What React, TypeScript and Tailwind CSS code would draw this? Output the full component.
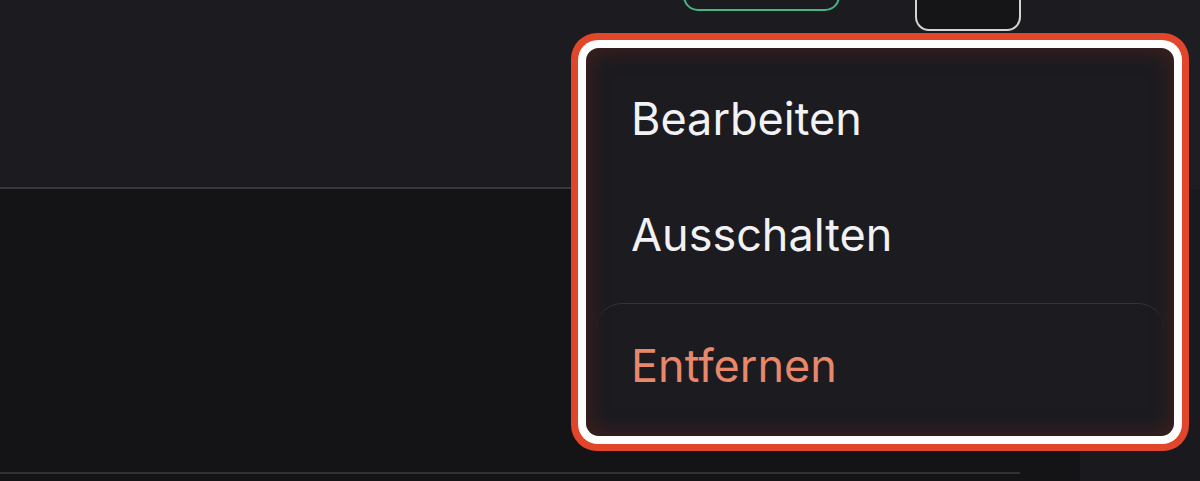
import React from "react";

const items = [
  { label: "Bearbeiten", danger: false },
  { label: "Ausschalten", danger: false },
];

function ActionMenu() {
  return (
    <div className="absolute left-[571px] top-[33px] w-[618px] h-[418px] rounded-[26px] bg-[#e1462b] p-[7px]">
      <div className="h-full w-full rounded-[20px] bg-white p-[8px]">
        <div className="flex h-full w-full flex-col rounded-[13px] bg-[#1c1b20] px-[10px] pt-[12px] pb-[10px] shadow-[inset_0_0_22px_rgba(110,38,28,0.55)]">
          {items.map((item) => (
            <div
              key={item.label}
              className="flex h-[116px] items-center px-[35px] text-[45px] leading-none text-[#f2f2f4]"
            >
              {item.label}
            </div>
          ))}
          <div className="mt-[11px] flex flex-1 items-center rounded-t-[26px] border-t border-[#34333a] px-[35px] text-[45px] leading-none text-[#e9876b]">
            Entfernen
          </div>
        </div>
      </div>
    </div>
  );
}

export default function App() {
  return (
    <div
      className="relative flex h-[481px] w-[1200px] overflow-hidden bg-[#141316]"
      style={{ fontFamily: "Inter, 'Noto Sans', sans-serif" }}
    >
      <div className="flex w-[1080px] flex-col">
        {/* header */}
        <div className="h-[189px] border-b-2 border-[#38373d] bg-[#1c1b20]">
          <div className="flex items-start">
            <div className="ml-[683px] -mt-[20px] h-[31px] w-[157px] rounded-[15px] border-2 border-[#45b584]" />
            <div className="ml-[75px] -mt-[14px] h-[45px] w-[106px] rounded-[14px] border-2 border-[#d4d4d6] bg-[#151417]" />
          </div>
        </div>
        <div className="flex-1" />
        <div className="mb-[7px] h-[2px] w-[1020px] bg-[#323137]" />
      </div>
      <div className="flex w-[120px] flex-col">
        <div className="h-[189px] bg-[#1e1d22]" />
        <div className="flex-1 bg-[#1a191d]" />
      </div>
      <ActionMenu />
    </div>
  );
}
